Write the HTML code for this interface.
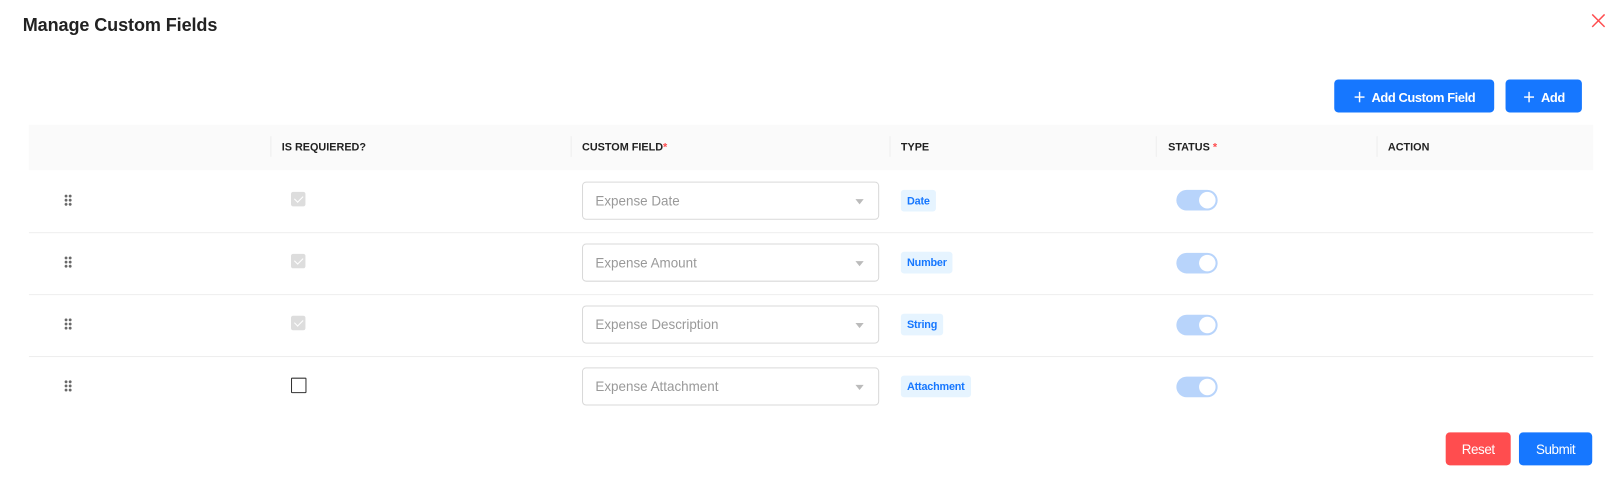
<!DOCTYPE html>
<html><head><style>
*{box-sizing:border-box;margin:0;padding:0}
body{width:1618px;height:493px;background:#fff;font-family:"Liberation Sans",sans-serif;position:relative;overflow:hidden;color:#222}
#w{position:absolute;left:0;top:0;width:1568px;height:478px;transform:scale(1.0319);transform-origin:0 0}
.abs{position:absolute}
h1{position:absolute;left:22px;top:14px;font-size:17.5px;font-weight:bold;color:#222;letter-spacing:-0.1px}
.btn{position:absolute;background:#1677ff;color:#fff;border-radius:4px;font-size:12.5px;font-weight:bold;display:flex;align-items:center;justify-content:center;letter-spacing:-0.4px}
.head{position:absolute;left:28px;top:121px;width:1516px;height:44px;background:#fafafa}
.th{position:absolute;top:137px;font-size:10.5px;font-weight:bold;color:#222}
.div{position:absolute;top:132px;width:1px;height:20px;background:#eee}
.row{position:absolute;left:28px;width:1516px;height:1px;background:#eee}
.sel{position:absolute;left:564px;width:288px;height:37px;border:1px solid #d9d9d9;border-radius:4px;font-size:13px;color:#999;padding:10px 12px}
.sel:after{content:"";position:absolute;right:14px;top:16px;border:4px solid transparent;border-top:5px solid #bbb}
.tag{position:absolute;left:873px;height:21px;background:#e6f4ff;color:#1677ff;font-size:10.5px;padding:5px 6px 0;border-radius:3px;font-weight:bold;letter-spacing:-0.2px}
.tog{position:absolute;left:1140px;width:40px;height:20px;border-radius:10px;background:#b8d4fb}
.tog:after{content:"";position:absolute;right:2px;top:2px;width:16px;height:16px;border-radius:50%;background:#fff}
.cb{position:absolute;left:282px;width:14px;height:14px;background:#ddd;border-radius:2px}
.cb:after{content:"";position:absolute;left:4.5px;top:1.5px;width:4px;height:7px;border:solid #fff;border-width:0 1.5px 1.5px 0;transform:rotate(45deg)}
.drag{position:absolute;left:62px;width:8px;height:12px;background:radial-gradient(circle,#666 1.2px,transparent 1.6px) 0 0/4px 4px}
</style></head><body><div id="w">
<h1>Manage Custom Fields</h1>
<svg class="abs" style="left:1542px;top:13px" width="14" height="14"><path d="M1 1L13 13M13 1L1 13" stroke="#ff4d4f" stroke-width="1.4"/></svg>
<div class="btn" style="left:1293px;top:77px;width:155px;height:32px">＋&nbsp; Add Custom Field</div>
<div class="btn" style="left:1459px;top:77px;width:74px;height:32px">＋&nbsp; Add</div>
<div class="head"></div>
<div class="div" style="left:262px"></div><div class="div" style="left:553px"></div><div class="div" style="left:862px"></div><div class="div" style="left:1120px"></div><div class="div" style="left:1334px"></div>
<div class="th" style="left:273px">IS REQUIERED?</div>
<div class="th" style="left:564px">CUSTOM FIELD<span style="color:#ff4d4f">*</span></div>
<div class="th" style="left:873px">TYPE</div>
<div class="th" style="left:1132px">STATUS <span style="color:#ff4d4f">*</span></div>
<div class="th" style="left:1345px">ACTION</div>

<div class="drag" style="top:188px"></div><div class="cb" style="top:186px"></div>
<div class="sel" style="top:176px">Expense Date</div><div class="tag" style="top:184px">Date</div><div class="tog" style="top:184px"></div>
<div class="row" style="top:225px"></div>
<div class="drag" style="top:248px"></div><div class="cb" style="top:246px"></div>
<div class="sel" style="top:236px">Expense Amount</div><div class="tag" style="top:244px">Number</div><div class="tog" style="top:245px"></div>
<div class="row" style="top:285px"></div>
<div class="drag" style="top:308px"></div><div class="cb" style="top:306px"></div>
<div class="sel" style="top:296px">Expense Description</div><div class="tag" style="top:304px">String</div><div class="tog" style="top:305px"></div>
<div class="row" style="top:345px"></div>
<div class="drag" style="top:368px"></div><div class="abs" style="left:282px;top:366px;width:15px;height:15px;border:1px solid #333;border-radius:1px"></div>
<div class="sel" style="top:356px">Expense Attachment</div><div class="tag" style="top:364px">Attachment</div><div class="tog" style="top:365px"></div>

<div class="btn" style="left:1401px;top:419px;width:63px;height:32px;background:#ff4d4f;font-weight:normal;font-size:13px">Reset</div>
<div class="btn" style="left:1472px;top:419px;width:71px;height:32px;font-weight:normal;font-size:13px">Submit</div>
</div></body></html>
